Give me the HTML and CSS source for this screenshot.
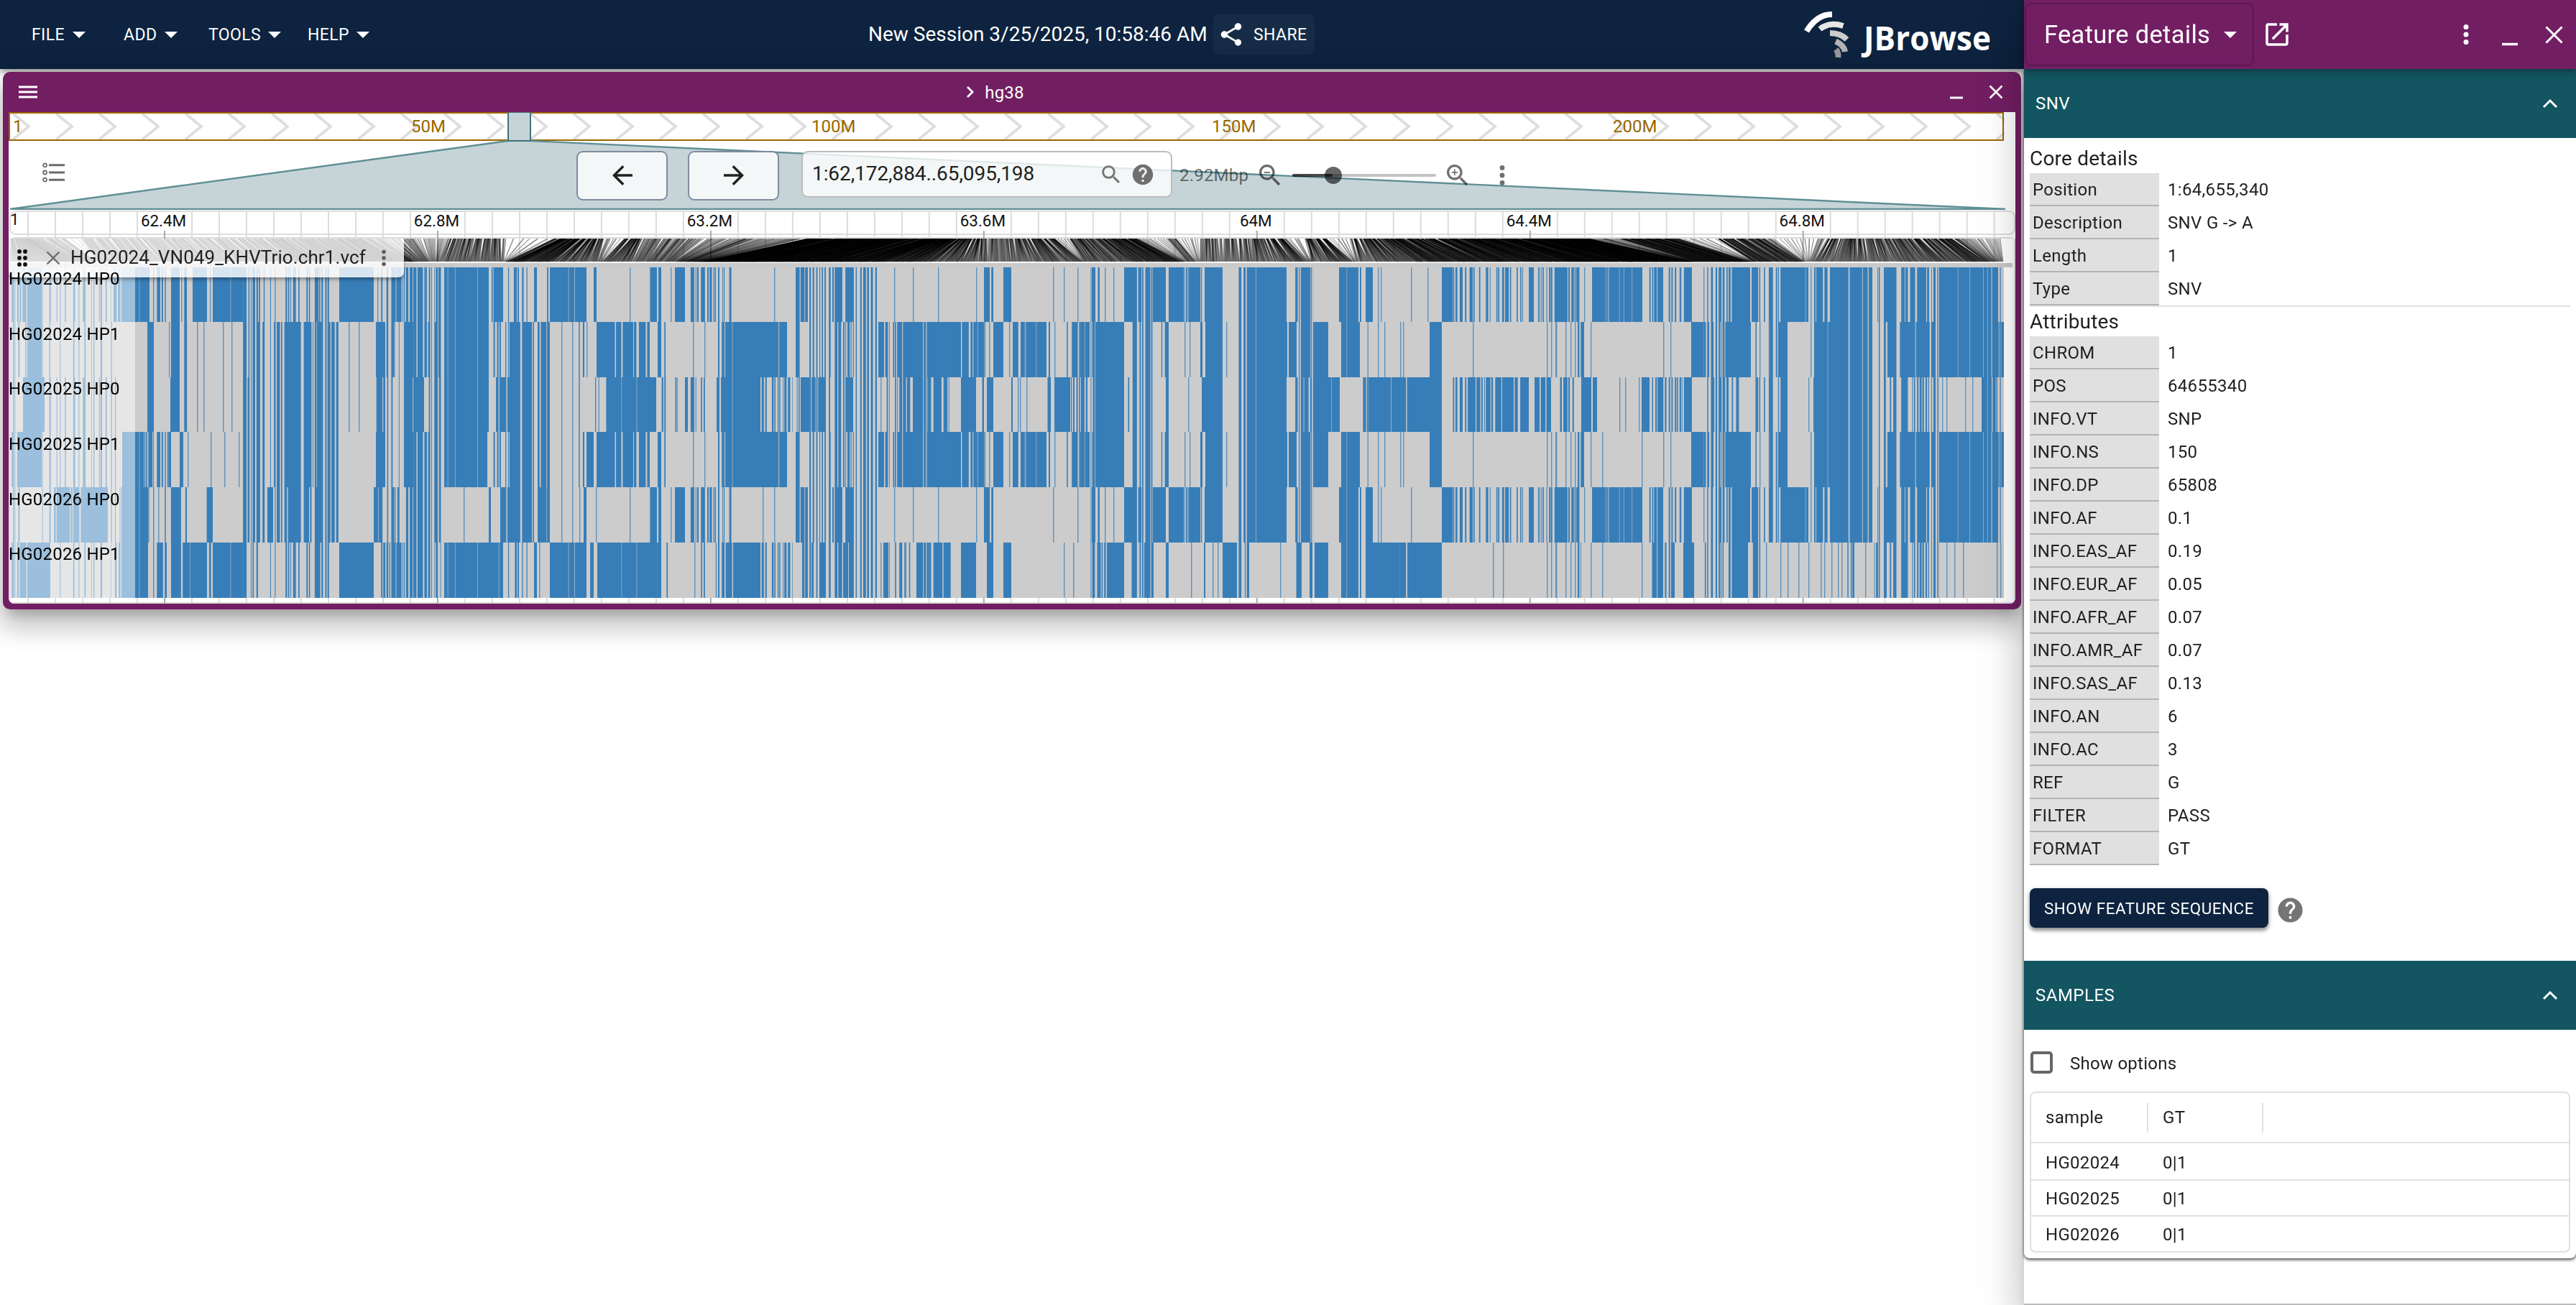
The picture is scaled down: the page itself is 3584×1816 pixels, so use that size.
FILE: index.html
```html
<!DOCTYPE html>
<html lang="en">
<head>
<meta charset="utf-8">
<title>JBrowse</title>
<link rel="stylesheet" href="styles.css">
</head>
<body>
<div class="app">
  <div class="workspace">
    <header class="appbar">
      <nav class="menus">
        <button class="menu menu-file">FILE<span class="caret"></span></button>
        <button class="menu menu-add">ADD<span class="caret"></span></button>
        <button class="menu menu-tools">TOOLS<span class="caret"></span></button>
        <button class="menu menu-help">HELP<span class="caret"></span></button>
      </nav>
      <div class="session">
        <span class="session-name">New Session 3/25/2025, 10:58:46 AM</span>
        <button class="share">
          <svg class="icon-share" viewBox="0 0 24 24"><path d="M18 16.08c-.76 0-1.44.3-1.96.77L8.91 12.7c.05-.23.09-.46.09-.7s-.04-.47-.09-.7l7.05-4.11c.54.5 1.25.81 2.04.81 1.66 0 3-1.34 3-3s-1.34-3-3-3-3 1.34-3 3c0 .24.04.47.09.7L8.04 9.81C7.5 9.31 6.79 9 6 9c-1.66 0-3 1.34-3 3s1.34 3 3 3c.79 0 1.5-.31 2.04-.81l7.12 4.16c-.05.21-.08.43-.08.65 0 1.61 1.31 2.92 2.92 2.92s2.92-1.31 2.92-2.92-1.31-2.92-2.92-2.92"/></svg>
          SHARE
        </button>
      </div>
      <svg class="logo" width="280" height="76" viewBox="0 0 280 76">
        <g fill="none" stroke-width="8">
          <path stroke="#ffffff" d="M13.500 33.500Q28 10 49 10"/>
          <path stroke="#e6e6e6" d="M32 30.500Q45 20 64.500 26"/>
          <path stroke="#cccccc" d="M46 36Q61 36 69.500 45"/>
          <path stroke="#b3b3b3" d="M54 47.500Q66 53 67 62"/>
          <path stroke="#999999" d="M54.500 58.500Q58 63 57.500 70"/>
        </g>
        <text class="logo-text" x="93" y="59.500" textLength="177" lengthAdjust="spacingAndGlyphs">JBrowse</text>
      </svg>
    </header>

    <section class="view">
      <div class="view-header">
        <svg class="view-menu" width="26" height="18" viewBox="0 0 26 18"><path d="M0 2h26M0 9h26M0 16h26" stroke="#fff" stroke-width="3"/></svg>
        <div class="view-title">
          <svg width="12" height="18" viewBox="0 0 12 18"><path d="M2 2l7 7-7 7" fill="none" stroke="#fff" stroke-width="2.800"/></svg>
          <span>hg38</span>
        </div>
        <div class="view-actions">
          <svg width="18" height="20" viewBox="0 0 18 20"><path d="M0 18h18" stroke="#fff" stroke-width="3"/></svg>
          <svg width="20" height="20" viewBox="0 0 20 20"><path d="M1.500 1.500l17 17M18.500 1.500l-17 17" stroke="#fff" stroke-width="2.600"/></svg>
        </div>
      </div>

      <div class="navigation">
        <svg class="overview" id="overview" width="2792" height="136" viewBox="0 0 2792 136"></svg>
        <div class="controls">
          <svg class="icon-list" width="32" height="28" viewBox="0 0 32 28" fill="none" stroke="#6b6b6b">
            <g stroke-width="1.800"><circle cx="3.500" cy="3.800" r="2.500"/><circle cx="3.500" cy="14" r="2.500"/><circle cx="3.500" cy="24.200" r="2.500"/></g>
            <path stroke-width="3" d="M9 3.800h22M9 14h22M9 24.200h22"/>
          </svg>
          <button class="pan pan-left"><svg width="28" height="28" viewBox="4 4 16 16"><path fill="#212121" d="M20 11H7.830l5.590-5.590L12 4l-8 8 8 8 1.410-1.410L7.830 13H20z"/></svg></button>
          <button class="pan pan-right"><svg width="28" height="28" viewBox="4 4 16 16"><path fill="#212121" d="m12 4-1.410 1.410L16.170 11H4v2h12.170l-5.580 5.590L12 20l8-8z"/></svg></button>
          <div class="search">
            <span class="location">1:62,172,884..65,095,198</span>
            <svg width="34" height="34" viewBox="0 0 24 24"><path fill="#757575" d="M15.500 14h-.79l-.28-.27C15.410 12.590 16 11.110 16 9.500 16 5.910 13.090 3 9.500 3S3 5.910 3 9.500 5.910 16 9.500 16c1.610 0 3.090-.59 4.230-1.570l.27.28v.79l5 4.990L20.490 19zm-6 0C7.010 14 5 11.990 5 9.500S7.010 5 9.500 5 14 7.010 14 9.500 11.990 14 9.500 14"/></svg>
            <svg width="34" height="34" viewBox="0 0 24 24"><path fill="#6f6f6f" d="M12 2C6.480 2 2 6.480 2 12s4.480 10 10 10 10-4.480 10-10S17.520 2 12 2m1 17h-2v-2h2zm2.070-7.750-.9.920C13.450 12.900 13 13.500 13 15h-2v-.5c0-1.100.45-2.100 1.170-2.830l1.240-1.260c.37-.36.59-.86.59-1.410 0-1.100-.9-2-2-2s-2 .9-2 2H8c0-2.210 1.790-4 4-4s4 1.790 4 4c0 .88-.36 1.680-.93 2.250"/></svg>
          </div>
          <span class="extent">2.92Mbp</span>
          <svg class="zoom-out" width="40" height="40" viewBox="0 0 24 24"><path fill="#000" fill-opacity=".58" d="M15.500 14h-.79l-.28-.27C15.410 12.590 16 11.110 16 9.500 16 5.910 13.090 3 9.500 3S3 5.910 3 9.500 5.910 16 9.500 16c1.610 0 3.090-.59 4.230-1.570l.27.28v.79l5 4.990L20.490 19zm-6 0C7.010 14 5 11.990 5 9.500S7.010 5 9.500 5 14 7.010 14 9.500 11.990 14 9.500 14M7 9h5v1H7z"/></svg>
          <svg class="slider" width="200" height="24" viewBox="0 0 200 24"><rect y="10" width="200" height="4" rx="2" fill="#000" fill-opacity=".24"/><rect y="10" width="56" height="4" rx="2" fill="#000" fill-opacity=".62"/><circle cx="57" cy="12" r="12" fill="#000" fill-opacity=".6"/></svg>
          <svg class="zoom-in" width="40" height="40" viewBox="0 0 24 24"><path fill="#000" fill-opacity=".56" d="M15.500 14h-.79l-.28-.27C15.410 12.590 16 11.110 16 9.500 16 5.910 13.090 3 9.500 3S3 5.910 3 9.500 5.910 16 9.500 16c1.610 0 3.090-.59 4.230-1.570l.27.28v.79l5 4.990L20.490 19zm-6 0C7.010 14 5 11.990 5 9.500S7.010 5 9.500 5 14 7.010 14 9.500 11.990 14 9.500 14m2.500-4h-2v2H9v-2H7V9h2V7h1v2h2z"/></svg>
          <svg class="kebab" width="8" height="30" viewBox="0 0 8 30" fill="#707070"><circle cx="4" cy="4.500" r="3.400"/><circle cx="4" cy="15" r="3.400"/><circle cx="4" cy="25.500" r="3.400"/></svg>
        </div>
      </div>

      <svg class="ruler" id="ruler" width="2792" height="40" viewBox="0 0 2792 40"></svg>

      <div class="track">
        <canvas id="matrix" class="matrix" width="2792" height="508"></canvas>
        <div class="track-label">
          <svg width="16" height="26" viewBox="0 0 16 26" fill="#111"><circle cx="4" cy="4" r="2.900"/><circle cx="12" cy="4" r="2.900"/><circle cx="4" cy="13" r="2.900"/><circle cx="12" cy="13" r="2.900"/><circle cx="4" cy="22" r="2.900"/><circle cx="12" cy="22" r="2.900"/></svg>
          <svg class="label-close" width="20" height="20" viewBox="0 0 20 20"><path d="M1.500 1.500l17 17M18.500 1.500l-17 17" stroke="#6b6b6b" stroke-width="2.400"/></svg>
          <span class="track-name">HG02024_VN049_KHVTrio.chr1.vcf</span>
          <svg class="label-more" width="8" height="24" viewBox="0 0 8 24" fill="#5f5f5f"><circle cx="4" cy="3.500" r="2.800"/><circle cx="4" cy="12" r="2.800"/><circle cx="4" cy="20.500" r="2.800"/></svg>
        </div>
        <ul class="samples">
          <li>HG02024 HP0</li><li>HG02024 HP1</li><li>HG02025 HP0</li><li>HG02025 HP1</li><li>HG02026 HP0</li><li>HG02026 HP1</li>
        </ul>
      </div>
    </section>
  </div>

  <aside class="drawer">
    <header class="drawer-bar">
      <button class="drawer-select">Feature details<span class="caret"></span></button>
      <svg class="icon-launch" width="42" height="42" viewBox="0 0 24 24"><path fill="#fff" d="M19 19H5V5h7V3H5c-1.110 0-2 .9-2 2v14c0 1.100.89 2 2 2h14c1.100 0 2-.9 2-2v-7h-2zM14 3v2h3.590l-9.830 9.830 1.410 1.410L19 6.410V10h2V3z"/></svg>
      <div class="drawer-actions">
        <svg width="8" height="30" viewBox="0 0 8 30" fill="#fff"><circle cx="4" cy="4.500" r="3.500"/><circle cx="4" cy="15" r="3.500"/><circle cx="4" cy="25.500" r="3.500"/></svg>
        <svg width="22" height="32" viewBox="0 0 22 32"><path d="M0 29.500h22" stroke="#fff" stroke-width="3.500"/></svg>
        <svg width="25" height="25" viewBox="0 0 25 25"><path d="M1.500 1.500l22 22M23.500 1.500l-22 22" stroke="#fff" stroke-width="3"/></svg>
      </div>
    </header>
    <div class="panel">
      <h2 class="section-bar">SNV<svg width="22" height="14" viewBox="0 0 22 14"><path d="M2 12l9-9 9 9" fill="none" stroke="#fff" stroke-width="3"/></svg></h2>
      <div class="section-body">
        <h3 class="group core-title">Core details</h3>
        <dl class="fields">
          <dt>Position</dt><dd>1:64,655,340</dd>
          <dt>Description</dt><dd>SNV G -&gt; A</dd>
          <dt>Length</dt><dd>1</dd>
          <dt>Type</dt><dd>SNV</dd>
        </dl>
        <hr class="rule">
        <h3 class="group">Attributes</h3>
        <dl class="fields">
          <dt>CHROM</dt><dd>1</dd>
          <dt>POS</dt><dd>64655340</dd>
          <dt>INFO.VT</dt><dd>SNP</dd>
          <dt>INFO.NS</dt><dd>150</dd>
          <dt>INFO.DP</dt><dd>65808</dd>
          <dt>INFO.AF</dt><dd>0.1</dd>
          <dt>INFO.EAS_AF</dt><dd>0.19</dd>
          <dt>INFO.EUR_AF</dt><dd>0.05</dd>
          <dt>INFO.AFR_AF</dt><dd>0.07</dd>
          <dt>INFO.AMR_AF</dt><dd>0.07</dd>
          <dt>INFO.SAS_AF</dt><dd>0.13</dd>
          <dt>INFO.AN</dt><dd>6</dd>
          <dt>INFO.AC</dt><dd>3</dd>
          <dt>REF</dt><dd>G</dd>
          <dt>FILTER</dt><dd>PASS</dd>
          <dt>FORMAT</dt><dd>GT</dd>
        </dl>
        <div class="sequence">
          <button class="sequence-button">SHOW FEATURE SEQUENCE</button>
          <svg width="41" height="41" viewBox="0 0 24 24"><path fill="#757575" d="M12 2C6.480 2 2 6.480 2 12s4.480 10 10 10 10-4.480 10-10S17.520 2 12 2m1 17h-2v-2h2zm2.070-7.750-.9.920C13.450 12.900 13 13.500 13 15h-2v-.5c0-1.100.45-2.100 1.170-2.830l1.240-1.260c.37-.36.59-.86.59-1.410 0-1.100-.9-2-2-2s-2 .9-2 2H8c0-2.210 1.790-4 4-4s4 1.790 4 4c0 .88-.36 1.680-.93 2.250"/></svg>
        </div>
      </div>
      <h2 class="section-bar">SAMPLES<svg width="22" height="14" viewBox="0 0 22 14"><path d="M2 12l9-9 9 9" fill="none" stroke="#fff" stroke-width="3"/></svg></h2>
      <div class="section-body">
        <label class="options"><span class="checkbox"></span>Show options</label>
        <div class="grid">
          <div class="grid-row grid-head"><span>sample</span><span>GT</span></div>
          <div class="grid-row"><span>HG02024</span><span>0|1</span></div>
          <div class="grid-row"><span>HG02025</span><span>0|1</span></div>
          <div class="grid-row"><span>HG02026</span><span>0|1</span></div>
        </div>
      </div>
    </div>
  </aside>
</div>
<script src="tracks.js"></script>
</body>
</html>
```
FILE: styles.css
```css
* { box-sizing: border-box; }
body { margin: 0; background: #fff; color: #212121; font-family: Roboto, "Liberation Sans", sans-serif; font-size: 24px; letter-spacing: 0.2px; }
button { border: 0; margin: 0; padding: 0; background: none; color: inherit; font: inherit; letter-spacing: inherit; }
h2, h3, ul, dl, dd { margin: 0; padding: 0; font-weight: 400; }
svg { display: block; flex: none; }
.app { display: grid; grid-template-columns: 2816px 768px; height: 1816px; overflow: hidden; }
.workspace { display: flex; flex-direction: column; min-width: 0; }

.appbar { height: 96px; flex: none; display: grid; grid-template-columns: 1208px 1292px 1fr; align-items: center; background: #0d233f; color: #fff; box-shadow: 0 4px 8px rgba(0, 0, 0, .4); }
.menus { display: flex; padding-left: 44px; }
.menu { display: flex; align-items: center; justify-content: space-between; font-size: 23px; letter-spacing: 0.4px; height: 56px; }
.menu-file { width: 75px; margin-right: 53px; }
.menu-add { width: 75px; margin-right: 43px; }
.menu-tools { width: 101px; margin-right: 37px; }
.menu-help { width: 86px; }
.caret { border: 9px solid transparent; border-top: 9px solid #fff; border-bottom: 0; margin-top: 1px; }
.session { display: flex; align-items: center; }
.session-name { font-size: 28px; width: 480px; position: relative; top: -1px; white-space: nowrap; letter-spacing: 0; }
.share { display: flex; align-items: center; gap: 12px; width: 141px; height: 56px; padding-left: 6px; border-radius: 8px; background: rgba(255, 255, 255, .04); font-size: 23px; letter-spacing: 0.4px; }
.icon-share { width: 38px; height: 38px; fill: #fff; }
.logo { margin-top: -1px; }
.logo-text { font-family: "Open Sans", "Noto Sans", sans-serif; font-weight: 700; font-size: 47px; fill: #fff; letter-spacing: 0; }

.view { width: 2808px; height: 748px; margin: 4px 0 0 4px; padding: 0 8px 8px; background: #721e63; border-radius: 10px; box-shadow: 0 14px 16px -8px rgba(0, 0, 0, .2), 0 24px 34px 4px rgba(0, 0, 0, .14), 0 10px 44px 8px rgba(0, 0, 0, .12); }
.view-header { height: 56px; display: flex; align-items: center; justify-content: space-between; padding: 0 17px 0 14px; color: #fff; }
.view-title { display: flex; align-items: center; gap: 14px; padding-left: 4px; }
.view-title span { padding-top: 2px; }
.view-actions { display: flex; align-items: center; gap: 36px; }
.navigation { height: 136px; background: #fff; position: relative; }
.overview { position: absolute; left: 0; top: 0; }
.controls { position: relative; display: flex; align-items: center; padding-top: 40px; height: 136px; }
.icon-list { margin: -9px 0 0 47px; }
.pan { width: 127px; height: 69px; border: 2px solid #7f8b9f; border-radius: 9px; background: rgba(255, 255, 255, .8); display: flex; align-items: center; justify-content: center; }
.pan-left { margin-left: 711px; }
.pan-right { margin-left: 28px; }
.search { width: 516px; height: 65px; margin: -3px 0 0 31px; padding-left: 13px; border: 2px solid #bdbdbd; border-radius: 9px; background: rgba(255, 255, 255, .8); display: flex; align-items: center; font-size: 28px; letter-spacing: -0.08px; gap: 10px; }
.location { width: 389px; padding-bottom: 2px; }
.extent { width: 107px; margin-left: 10px; color: rgba(0, 0, 0, .55); }
.zoom-out { margin-left: -1px; }
.slider { margin-left: 11px; }
.zoom-in { margin-left: 10px; }
.kebab { margin-left: 38px; }
.ruler { background: #fff; }
.track { height: 508px; position: relative; background: #fff; border-radius: 0 0 8px 8px; overflow: hidden; }
.matrix { display: block; }
.track-label { position: absolute; left: 0; top: 0; width: 550px; height: 54px; display: flex; align-items: center; padding-left: 11px; background: rgba(255, 255, 255, .8); border-radius: 0 0 8px 8px; box-shadow: 0 3px 5px rgba(0, 0, 0, .35); font-size: 26px; letter-spacing: 0.1px; }
.label-close { margin-left: 25px; }
.track-name { width: 420px; margin-left: 14px; padding-bottom: 2px; white-space: nowrap; }
.label-more { margin-left: 12px; }
.samples { position: absolute; left: 0; top: 41px; list-style: none; color: #000; }
.samples li { height: 76.670px; line-height: 30px; }

.drawer { position: relative; background: #fff; border-bottom: 2px solid #bbb; box-shadow: 0 16px 20px -10px rgba(0, 0, 0, .2), 0 32px 48px 4px rgba(0, 0, 0, .14), 0 12px 60px 10px rgba(0, 0, 0, .12); }
.drawer-bar { position: relative; z-index: 1; height: 96px; display: flex; align-items: center; padding: 0 18px 0 1px; background: #721e63; color: #fff; box-shadow: 0 4px 8px rgba(0, 0, 0, .3); }
.drawer-select { width: 319px; height: 88px; display: flex; align-items: center; padding-left: 25px; gap: 19px; border: 2px solid #5b184f; border-radius: 9px; font-size: 34.500px; letter-spacing: 0.3px; white-space: nowrap; }
.icon-launch { margin-left: 11px; }
.drawer-actions { display: flex; align-items: center; margin-left: auto; gap: 46px; }
.drawer-actions svg:last-child { margin-left: -8px; }
.panel { height: 1655px; border-radius: 0 0 8px 8px; box-shadow: 0 2px 4px rgba(0, 0, 0, .75); }
.section-bar { height: 96px; display: flex; align-items: center; justify-content: space-between; padding: 0 25px 0 16px; background: #135560; color: #fff; font-size: 24px; letter-spacing: 0.5px; }
.section-body { padding: 0 8px; }
.group { height: 41px; line-height: 41px; font-size: 28px; letter-spacing: 0.2px; }
.core-title { margin-top: 8px; }
.fields { display: grid; grid-template-columns: 180px 1fr; grid-auto-rows: 46px; line-height: 46px; letter-spacing: 0.32px; }
.fields dt { height: 46px; padding-left: 4px; background: #e0e0e0; border-bottom: 2px solid #b3b3b3; }
.fields dd { padding-left: 12px; }
.rule { height: 2px; margin: 0; border: 0; background: #e0e0e0; }
.sequence { display: flex; height: 133px; padding-top: 32px; gap: 10px; }
.sequence svg { margin-top: 10px; }
.sequence-button { width: 332px; height: 55px; border-radius: 8px; background: #0d233f; color: #fff; font-size: 22.400px; letter-spacing: 0.56px; white-space: nowrap; box-shadow: 0 4px 5px rgba(0, 0, 0, .35), 0 2px 8px rgba(0, 0, 0, .2); }
.options { display: flex; align-items: center; gap: 24px; height: 86px; padding: 7px 0 0 1px; letter-spacing: 0.25px; }
.checkbox { width: 31px; height: 31px; border: 4px solid #666; border-radius: 5px; margin-top: -2px; }
.grid { border: 2px solid #e0e0e0; border-radius: 8px; letter-spacing: 0.3px; }
.grid-row { display: grid; grid-template-columns: 163px 160px 1fr; align-items: center; height: 50px; padding-top: 1px; border-top: 2px solid #e0e0e0; }
.grid-row span { padding-left: 20px; }
.grid-head { height: 68px; border-top: 0; padding-top: 0; }
.grid-head span { height: 41px; line-height: 41px; border-right: 2px solid #e0e0e0; }
.grid-head + .grid-row { height: 52px; padding-top: 3px; }
```
FILE: tracks.js
```js
const NS = 'http://www.w3.org/2000/svg';
function add(parent, name, attrs, text) {
  const el = document.createElementNS(NS, name);
  for (const k in attrs) el.setAttribute(k, attrs[k]);
  if (text) el.textContent = text;
  parent.appendChild(el);
  return el;
}
// Page x to view x.
const OFF = 12;

function drawOverview() {
  const svg = document.getElementById('overview');
  for (let x = 18; x < 2780; x += 60) {
    add(svg, 'path', { d: `M${x - 12} 2L${x + 10} 20L${x - 12} 38`, fill: 'none', stroke: '#dedede', 'stroke-width': 3.8 });
  }
  add(svg, 'rect', { x: 1, y: 1, width: 2774, height: 38, fill: 'none', stroke: '#9a6700', 'stroke-width': 2 });
  add(svg, 'rect', { x: 2777, y: 0, width: 15, height: 40, fill: '#fff' });
  const labels = [['1', 6], ['50M', 560], ['100M', 1117], ['150M', 1674], ['200M', 2232]];
  for (const [t, x] of labels) add(svg, 'text', { x, y: 28, fill: '#9a6700', 'font-size': 24, 'letter-spacing': 0 }, t);
  add(svg, 'path', { d: 'M695 40L726 40L2778 135L2 135Z', fill: '#c6d4d8' });
  add(svg, 'path', { d: 'M695 40L2 135H2778L726 40', fill: 'none', stroke: '#5f8f94', 'stroke-width': 2.4 });
  add(svg, 'rect', { x: 695, y: 0, width: 31, height: 40, fill: '#c6d4d8', stroke: '#45727b', 'stroke-width': 2 });
}

function drawRuler() {
  const svg = document.getElementById('ruler');
  const names = ['62.4M', '62.8M', '63.2M', '63.6M', '64M', '64.4M', '64.8M'];
  add(svg, 'rect', { x: 2, y: 2, width: 2789, height: 32, rx: 8, fill: 'none', stroke: '#dcdcdc', 'stroke-width': 2 });
  add(svg, 'path', { d: 'M2 48V46Q2 39 10 39H2783Q2791 39 2791 46V48', fill: 'none', stroke: '#dcdcdc', 'stroke-width': 2 });
  for (let i = -5; i <= 67; i++) {
    const x = 217 + i * 37.995;
    if (x > 2780) break;
    if (i % 10 === 0) {
      add(svg, 'path', { d: `M${x} 29V40`, stroke: '#aaaaaa', 'stroke-width': 2 });
      add(svg, 'text', { x: x - 1.500, y: 23, 'text-anchor': 'middle', fill: '#111', 'font-size': 22.400, 'letter-spacing': 0 }, names[i / 10]);
    } else add(svg, 'path', { d: `M${x} 3V40`, stroke: '#dcdcdc', 'stroke-width': 2 });
  }
  add(svg, 'text', { x: 2, y: 21, fill: '#111', 'font-size': 22.400 }, '1');
}

function random(seed) {
  let s = seed;
  return () => { s = (s * 1664525 + 1013904223) >>> 0; return s / 4294967296; };
}

// Haplotype runs, written "start:density" with density 0 (reference) to 9 (alternate); "x" marks a single variant.
const wide = '830:9 845:8 904:0 915:9 920:0 922:7 926:0 930:3 939:0 964:x 980:x 998:5 1009:9 1078:8 1095:3 1103:5 1115:0 1125:4 1158:3 1200:5 1222:9 1230:7 1262:8 1305:9 1337:6 1355:9 1369:2 1382:9 1396:0 1404:x 1409:8 1420:9 1456:4 1461:0 1467:x 1481:3 1490:7 1503:9 1516:4 1524:9 1564:0 1574:5 1605:1 1622:9 1626:0 1648:x 1655:x 1670:9 1673:0 1677:9 1701:0 1706:x 1721:7 1738:9 1791:0 1793:9 1804:3 1811:9 1823:5 1829:9 1848:0 1866:9 1892:4 1904:0 1917:x 1926:x 1948:x 1952:x 1989:9 2006:0 2049:x';
const wideEnd = '2152:x 2158:x 2164:x 2165:x 2178:x 2185:x 2191:x 2195:8 2204:0 2213:x 2314:x 2324:x 2353:9 2370:7 2384:3 2400:7 2410:9 2436:3 2444:0 2448:x 2458:4 2463:8 2487:0 2519:x 2524:9 2548:8 2605:2 2625:7 2645:8 2700:9 2788:0';
const narrow = '876:x 904:x 905:9 914:0 916:9 920:0 925:4 930:0 933:x 939:9 953:0 956:4 966:5 984:8 996:3 1020:0 1077:x 1103:6 1120:4 1158:8 1172:0 1176:6 1190:4 1222:0 1244:x 1270:x 1305:x 1358:x 1369:9 1377:5 1382:0';
const narrowMid = '1465:x 1499:x 1513:5 1519:9 1524:6 1530:0 1537:x 1549:x 1564:8 1588:5 1604:9 1622:0 1626:9 1647:6 1657:9 1670:2 1676:9 1701:0 1721:7 1738:9 1790:0 1800:4 1811:9 1823:5 1827:0 1863:9 1890:4 1900:9 1910:0 1917:x 1921:x 1963:x 2006:9 2021:6 2035:3 2119:0 2127:9 2134:0 2140:4 2157:7 2200:0 2204:x 2215:8 2222:9 2285:0 2294:5 2314:1 2325:6 2340:7 2355:0 2370:x 2374:4 2385:6 2395:4 2410:9 2435:5 2460:6 2478:9 2516:0 2519:x 2524:8 2605:3 2620:6 2650:7 2680:6 2698:9 2780:5 2786:0';
const rows = [
  '14:4 26:5 38:9 58:4 72:2 155:5 170:9 208:0 213:6 228:3 233:0 238:9 250:0 252:x 256:4 268:9 288:0 292:x 296:9 338:5 372:3 405:2 437:5 443:4 472:9 520:0 525:x 530:5 545:8 561:3 575:6 592:5 605:7 618:9 680:4 692:9 700:4 720:1 725:4 735:0 743:9 747:1 765:9 797:8 816:0 826:9 830:0 ' + narrow + ' 1396:9 1407:0 1480:x 1986:x ' + narrowMid,
  '14:3 38:9 58:3 70:1 170:0 205:9 214:0 235:x 238:9 250:0 256:6 261:0 274:x 283:x 310:x 322:x 338:4 345:6 405:8 440:6 472:0 485:x 499:x 523:8 536:5 550:2 562:9 575:6 600:7 618:9 680:2 700:5 709:8 743:0 748:8 765:0 781:x 796:x 805:4 813:0 816:x 826:3 843:9 904:0 ' + wide + ' ' + wideEnd,
  '14:3 22:0 32:9 62:2 170:0 205:9 214:0 237:9 250:0 256:5 261:0 274:x 283:x 310:x 322:x 338:6 405:8 440:6 472:0 485:x 499:x 523:7 536:3 562:8 590:3 600:6 618:9 680:0 690:8 743:0 748:8 765:0 781:x 796:x 805:4 811:0 826:6 830:3 845:9 904:9 913:0 920:4 943:0 953:9 957:4 984:0 997:8 1009:9 1049:8 1058:4 1090:6 1103:3 1114:9 1126:6 1155:4 1182:9 1187:3 1200:5 1270:8 1290:6 1310:2 1325:5 1330:0 1337:9 1358:3 1369:0 1373:9 1382:0 1407:9 1409:0 1416:x 1419:x 1428:x 1456:6 1462:0 1467:9 1489:4 1513:2 1524:9 1564:2 1574:5 1605:0 1622:9 1626:0 1653:x 1672:9 1701:0 1721:6 1738:9 1790:0 1800:4 1811:8 1848:9 1864:0 1892:5 1904:9 1935:7 1960:9 2006:0 2021:5 2035:6 2100:8 2127:0 2135:9 2142:6 2158:2 2175:4 2192:0 2200:9 2214:5 2222:1 2240:0 2253:x 2261:x 2280:x 2284:9 2295:4 2300:0 2303:6 2320:7 2355:0 2374:6 2405:1 2432:3 2460:5 2478:9 2487:0 2516:x 2523:9 2548:8 2605:2 2625:5 2698:0 2702:x 2708:x 2734:x 2744:x 2757:9 2771:6 2779:3 2788:0',
  '14:4 27:9 58:4 72:2 170:9 200:7 214:0 218:5 235:9 238:1 250:9 255:0 261:x 293:x 312:x 332:x 338:6 405:8 440:6 472:0 523:8 536:2 562:9 575:6 618:9 678:2 700:5 709:8 743:0 748:8 765:0 781:x 796:x 805:4 813:0 816:9 826:3 843:9 904:0 ' + wide + ' 2229:x 2284:x ' + wideEnd,
  '14:3 22:1 58:3 75:8 150:3 170:8 187:9 206:2 238:9 250:3 262:2 288:9 296:0 338:6 372:9 380:5 405:8 430:6 472:0 520:9 526:4 562:5 575:6 618:0 645:x 680:9 683:0 696:9 700:8 743:0 748:9 765:0 781:x 796:x 806:x 812:9 816:0 829:x 1061:x ' + narrow + ' ' + narrowMid,
  '14:4 26:7 38:9 70:1 155:4 170:9 206:0 213:7 232:0 238:9 250:4 258:9 288:2 296:9 338:3 405:2 437:4 472:9 520:0 530:7 561:3 575:6 605:5 618:9 700:3 735:0 743:9 747:0 750:x 765:9 797:8 816:3 823:9 826:0 831:9 845:9 904:8 915:9 920:0 925:5 932:0 939:0 966:x 974:4 985:1 995:5 1009:7 1020:9 1058:4 1090:6 1103:1 1114:7 1132:5 1180:4 1229:9 1236:4 1262:3 1275:8 1292:6 1325:5 1330:0 1337:9 1358:2 1369:0 1373:9 1382:0 1396:9 1407:0 1480:x 1493:x 1513:4 1524:7 1540:9 1564:0 1574:6 1605:0 1622:9 1626:0 1657:x 1675:9 1677:0 1687:x 1694:x 1701:9 1721:4 1738:0 1781:x 1803:6 1811:0 1822:9 1826:0 1829:9 1848:0 1866:9 1890:4 1900:9 1947:5 1958:9 2006:0 2077:x 2091:x 2152:x 2158:x 2164:x 2165:x 2178:x 2185:x 2191:x 2195:8 2200:0 2213:x 2229:x 2284:x 2298:6 2314:3 2325:9 2330:2 2342:8 2357:0 2370:3 2385:4 2398:0 2404:6 2410:9 2432:2 2438:5 2450:0 2457:x 2477:x 2487:x 2502:x 2516:x 2533:x 2538:x 2548:x 2557:x 2562:x 2570:6 2580:0 2595:x 2605:6 2625:5 2698:0 2708:x 2719:x 2731:x 2778:x 2783:x 2788:0'
];

// Variant fan: matrix column x (bottom) against genome x (top).
const fan = [[14, 14], [100, 45], [134, 90], [136, 112], [560, 508], [575, 530], [596, 576], [601, 596], [605, 606], [612, 625], [700, 700], [705, 770], [713, 780], [829, 838], [835, 848], [838, 870], [843, 874], [878, 892], [928, 959], [934, 968], [954, 1035], [961, 1048], [978, 1124], [1057, 1191], [1191, 1294], [1325, 1347], [1370, 1370], [1400, 1400], [1505, 1467], [1509, 1489], [1645, 1583], [1653, 1623], [1663, 1637], [1669, 1668], [1677, 1677], [1748, 1744], [1820, 1788], [1825, 1817], [1882, 1846], [1887, 1880], [1998, 1945], [2100, 2025], [2351, 2207], [2361, 2254], [2435, 2333], [2440, 2389], [2505, 2454], [2510, 2468], [2518, 2530], [2526, 2545], [2593, 2589], [2761, 2715], [2770, 2728], [2787, 2782]];

function drawTrack() {
  const ctx = document.getElementById('matrix').getContext('2d');
  ctx.translate(-OFF, 0);
  ctx.fillStyle = '#fff';
  ctx.fillRect(OFF, 0, 2792, 508);
  ctx.strokeStyle = '#dcdcdc';
  ctx.lineWidth = 2;
  ctx.strokeRect(13, -20, 2790, 527);

  const fr = random(11);
  let k = 0;
  ctx.lineWidth = 1.6;
  let jitter = 0;
  for (let b = 14; b < 2787; b += 0.8) {
    while (k < fan.length - 2 && fan[k + 1][0] <= b) k++;
    const [b0, t0] = fan[k], [b1, t1] = fan[k + 1];
    if (fr() < 0.35) jitter = (fr() - 0.5) * 5;
    const t = t0 + (t1 - t0) * (b - b0) / (b1 - b0) + jitter;
    ctx.strokeStyle = `rgba(0,0,0,${0.26 + fr() * 0.22})`;
    ctx.beginPath();
    ctx.moveTo(Math.max(13, t), 0);
    ctx.lineTo(b, 32);
    ctx.stroke();
  }
  for (let i = -5; i <= 67; i++) {
    const x = 229 + i * 37.995;
    ctx.fillStyle = i % 10 ? 'rgba(0,0,0,.13)' : 'rgba(0,0,0,.33)';
    ctx.fillRect(x - 1, 0, 2, 32);
    ctx.fillRect(x - 1, 500, 2, 7);
  }
  ctx.fillStyle = '#c9c9c9';
  ctx.fillRect(14, 34, 2786, 6);
  ctx.fillStyle = '#cccccc';
  ctx.fillRect(14, 39, 2774, 461);

  // Allele noise is shared by all rows, so related haplotypes line up.
  const cells = [];
  const cr = random(5);
  for (let x = 14; x < 2788;) {
    const w = 0.8 + cr() * 1.4;
    cells.push([x, w, cr()]);
    x += w;
  }
  rows.forEach((text, r) => {
    const marks = text.split(' ').map(s => s.split(':'));
    const runs = marks.filter(m => m[1] !== 'x').map(m => [+m[0], +m[1]]).sort((a, c) => a[0] - c[0]);
    const y = r ? Math.round(39 + r * 76.83) : 40;
    const h = r === 5 ? 500 - y : Math.round(39 + (r + 1) * 76.83) - y;
    ctx.fillStyle = '#377eb8';
    runs.forEach(([x0, d], i) => {
      const x1 = i + 1 < runs.length ? runs[i + 1][0] : 2788;
      if (d === 0) return;
      if (d === 9) {
        ctx.fillRect(x0, y, x1 - x0, h);
        return;
      }
      const p = [0, 0.1, 0.2, 0.3, 0.42, 0.55, 0.66, 0.77, 0.88][d];
      let start = null;
      for (const [cx, w, v] of cells) {
        if (cx < x0 || cx >= x1) continue;
        if (v < p) { if (start === null) start = cx; }
        else if (start !== null) { ctx.fillRect(start, y, cx - start, h); start = null; }
      }
      if (start !== null) ctx.fillRect(start, y, x1 - start, h);
      if (d > 7) ctx.fillRect(x0, y, 2, h);
    });
    // Lone reference calls inside solid blocks.
    ctx.fillStyle = 'rgba(204,204,204,.6)';
    runs.forEach(([x0, d], i) => {
      if (d !== 9) return;
      const x1 = i + 1 < runs.length ? runs[i + 1][0] : 2788;
      for (const [cx, , v] of cells) {
        if (cx > x0 + 4 && cx < x1 - 4 && v > 0.95) ctx.fillRect(cx, y, 0.9, h);
      }
    });
    ctx.fillStyle = '#5c93c0';
    marks.filter(m => m[1] === 'x').forEach(m => ctx.fillRect(+m[0], y, 1.4, h));
  });
  ctx.fillStyle = 'rgba(255,255,255,.5)';
  ctx.fillRect(14, 40, 174, 460);
}

drawOverview();
drawRuler();
drawTrack();
```
